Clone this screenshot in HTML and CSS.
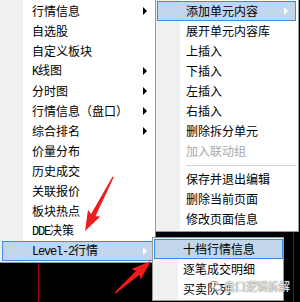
FILE: index.html
```html
<!DOCTYPE html>
<html lang="zh-CN">
<head>
<meta charset="utf-8">
<title>Menu</title>
<link rel="stylesheet" href="styles.css">
</head>
<body>
<div class="screen">
  <div class="chart-line line-a"></div>
  <div class="chart-line line-b"></div>

  <div class="menu main-menu">
    <div class="item"><span>行情信息</span><i class="caret"></i></div>
    <div class="item"><span>自选股</span></div>
    <div class="item"><span>自定义板块</span></div>
    <div class="item"><span><span class="latin">K</span>线图</span><i class="caret"></i></div>
    <div class="item"><span>分时图</span><i class="caret"></i></div>
    <div class="item"><span>行情信息（盘口）</span><i class="caret"></i></div>
    <div class="item"><span>综合排名</span><i class="caret"></i></div>
    <div class="item"><span>价量分布</span></div>
    <div class="item"><span>历史成交</span></div>
    <div class="item"><span>关联报价</span></div>
    <div class="item"><span>板块热点</span></div>
    <div class="item"><span><span class="latin">DDE</span>决策</span></div>
    <div class="item active"><span><span class="latin">Level-2</span>行情</span><i class="caret light"></i></div>
  </div>

  <div class="menu sub-menu">
    <div class="item active"><span>添加单元内容</span><i class="caret light"></i></div>
    <div class="item"><span>展开单元内容库</span></div>
    <div class="item"><span>上插入</span></div>
    <div class="item"><span>下插入</span></div>
    <div class="item"><span>左插入</span></div>
    <div class="item"><span>右插入</span></div>
    <div class="item"><span>删除拆分单元</span></div>
    <div class="item disabled"><span>加入联动组</span></div>
    <div class="separator"></div>
    <div class="item"><span>保存并退出编辑</span></div>
    <div class="item"><span>删除当前页面</span></div>
    <div class="item"><span>修改页面信息</span></div>
  </div>

  <div class="menu level2-menu">
    <div class="item active"><span>十档行情信息</span></div>
    <div class="item"><span>逐笔成交明细</span></div>
    <div class="item"><span>买卖队列</span></div>
  </div>

  <svg class="annotations" width="300" height="302" viewBox="0 0 300 302">
    <polygon points="112.6,176.6 113.6,177.4 95.5,216.3 100.4,216.5 85,231 88.0,210.1 91.1,213.9" fill="#ee1c1c"/>
    <polygon points="114.5,292.4 115.5,293.6 139.3,274.9 140.7,279.5 151,261 131.5,269.1 135.9,271.1" fill="#ee1c1c"/>
  </svg>

  <div class="watermark">
    <svg class="wm-icon" width="13" height="12" viewBox="0 0 13 12">
      <ellipse cx="5" cy="5" rx="4.3" ry="3.6" fill="none" stroke="#8a8a8a" stroke-width="1"/>
      <ellipse cx="8.6" cy="7.4" rx="3.6" ry="3" fill="#fff" stroke="#8a8a8a" stroke-width="1"/>
    </svg>
    <span>盘口逻辑拆解</span>
  </div>
</div>
</body>
</html>
```

FILE: styles.css
```css
html, body {
  margin: 0;
  padding: 0;
  background: #000;
}

.screen {
  position: relative;
  width: 300px;
  height: 302px;
  overflow: hidden;
  background: #000;
  font-family: "Noto Sans CJK SC", "Noto Sans", sans-serif;
  font-size: 12px;
  color: #000;
}

.chart-line {
  position: absolute;
  width: 1px;
  background: #a80000;
}

.line-a {
  left: 38px;
  top: 262px;
  bottom: 0;
}

.line-b {
  left: 293px;
  top: 230px;
  bottom: 0;
}

.menu {
  position: absolute;
  display: flex;
  flex-direction: column;
}

.item {
  box-sizing: border-box;
  height: 20px;
  border: 1px solid transparent;
  display: flex;
  align-items: center;
  line-height: 18px;
  white-space: nowrap;
}

.item.active {
  background: #c1d6ea;
  border-color: #3a8ee0;
}

.item.disabled {
  color: #a9a9a9;
}

.latin {
  font-family: "Liberation Mono", monospace;
  font-size: 12px;
  letter-spacing: -1.2px;
}

.caret {
  margin-left: auto;
  width: 0;
  height: 0;
  border-left: 4px solid #000;
  border-top: 4px solid transparent;
  border-bottom: 4px solid transparent;
}

.caret.light {
  border-left-color: #fff;
}

/* main context menu */
.main-menu {
  left: 0;
  top: -2px;
  width: 155px;
  padding: 2px 0 1px;
  border-top: 1px solid #979797;
  border-right: 1px solid #808080;
  border-bottom: 1px solid #979797;
  background: linear-gradient(to right, #f0f0f0 0 23px, #fff 23px);
}

.main-menu .item {
  margin: 0 1px 0 2px;
  padding-left: 29px;
}

.main-menu .caret {
  margin-right: 6px;
}

/* first submenu */
.sub-menu {
  left: 155px;
  top: -2px;
  width: 142px;
  padding: 2px 0;
  border: 1px solid #979797;
  background: linear-gradient(to right, #f0f0f0 0 24px, #fff 24px);
}

.sub-menu .item {
  margin: 0 2px 0 1px;
  padding-left: 28px;
}

.sub-menu .caret {
  margin-right: 7px;
}

.separator {
  height: 8px;
  margin: 0 2px 0 30px;
  display: flex;
  align-items: center;
}

.separator::before {
  content: "";
  flex: 1;
  height: 1px;
  background: #d4d4d4;
}

/* level-2 submenu */
.level2-menu {
  left: 152px;
  top: 237px;
  width: 130px;
  padding: 1px 0;
  border: 1px solid #979797;
  background: linear-gradient(to right, #f0f0f0 0 25px, #fff 25px);
}

.level2-menu .item {
  margin: 0 0 0 1px;
  padding-left: 28px;
}

.annotations {
  position: absolute;
  left: 0;
  top: 0;
  pointer-events: none;
}

.watermark {
  position: absolute;
  left: 209px;
  top: 279px;
  display: flex;
  align-items: center;
  gap: 2px;
  font-size: 11px;
  line-height: 14px;
  color: rgba(255, 255, 255, 0.9);
  text-shadow: 0 0 1px #6f6f6f, 0 0 1px #6f6f6f;
}

.wm-icon {
  display: block;
}
```
